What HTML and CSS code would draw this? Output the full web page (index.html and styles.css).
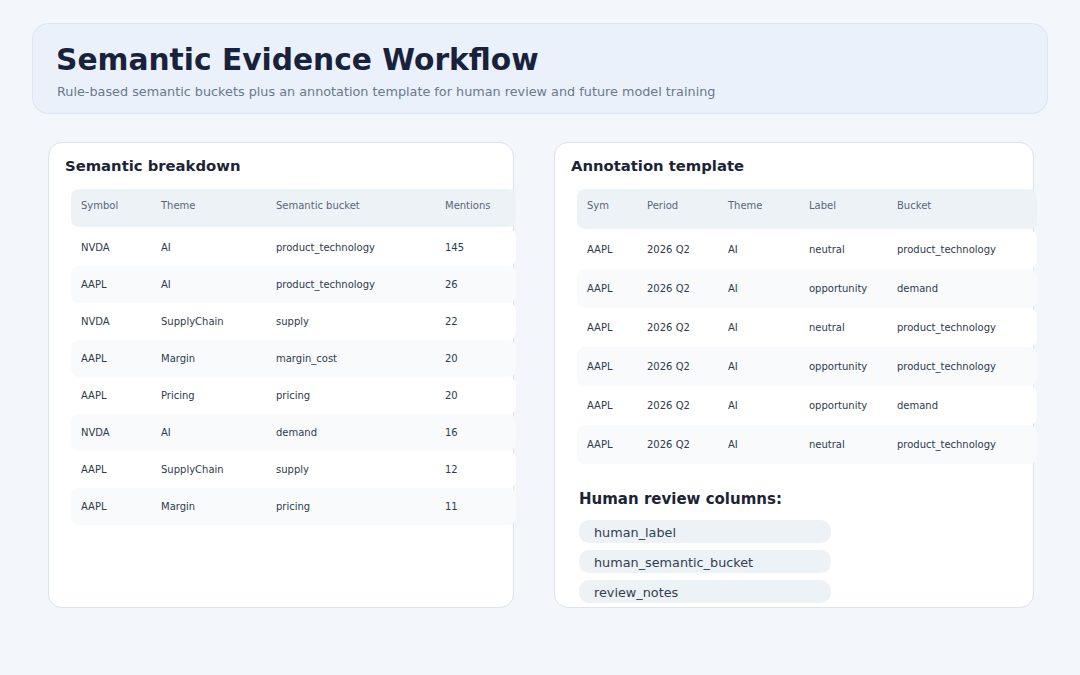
FILE: index.html
```html
<!DOCTYPE html>
<html>
<head>
<meta charset="utf-8">
<link rel="stylesheet" href="styles.css">
</head>
<body>
<div class="page">
  <header class="hero">
    <h1 class="hero-title">Semantic Evidence Workflow</h1>
    <p class="hero-sub">Rule-based semantic buckets plus an annotation template for human review and future model training</p>
  </header>
  <main class="cards">
    <section class="card card-left">
      <h2 class="card-title">Semantic breakdown</h2>
      <div class="tbl tbl-left">
        <div class="row head"><span>Symbol</span><span>Theme</span><span>Semantic bucket</span><span>Mentions</span></div>
        <div class="row"><span>NVDA</span><span>AI</span><span>product_technology</span><span>145</span></div>
        <div class="row alt"><span>AAPL</span><span>AI</span><span>product_technology</span><span>26</span></div>
        <div class="row"><span>NVDA</span><span>SupplyChain</span><span>supply</span><span>22</span></div>
        <div class="row alt"><span>AAPL</span><span>Margin</span><span>margin_cost</span><span>20</span></div>
        <div class="row"><span>AAPL</span><span>Pricing</span><span>pricing</span><span>20</span></div>
        <div class="row alt"><span>NVDA</span><span>AI</span><span>demand</span><span>16</span></div>
        <div class="row"><span>AAPL</span><span>SupplyChain</span><span>supply</span><span>12</span></div>
        <div class="row alt"><span>AAPL</span><span>Margin</span><span>pricing</span><span>11</span></div>
      </div>
    </section>
    <section class="card card-right">
      <h2 class="card-title">Annotation template</h2>
      <div class="tbl tbl-right">
        <div class="row head"><span>Sym</span><span>Period</span><span>Theme</span><span>Label</span><span>Bucket</span></div>
        <div class="row"><span>AAPL</span><span>2026 Q2</span><span>AI</span><span>neutral</span><span>product_technology</span></div>
        <div class="row alt"><span>AAPL</span><span>2026 Q2</span><span>AI</span><span>opportunity</span><span>demand</span></div>
        <div class="row"><span>AAPL</span><span>2026 Q2</span><span>AI</span><span>neutral</span><span>product_technology</span></div>
        <div class="row alt"><span>AAPL</span><span>2026 Q2</span><span>AI</span><span>opportunity</span><span>product_technology</span></div>
        <div class="row"><span>AAPL</span><span>2026 Q2</span><span>AI</span><span>opportunity</span><span>demand</span></div>
        <div class="row alt"><span>AAPL</span><span>2026 Q2</span><span>AI</span><span>neutral</span><span>product_technology</span></div>
      </div>
      <h3 class="review-title">Human review columns:</h3>
      <ul class="chips">
        <li class="chip">human_label</li>
        <li class="chip">human_semantic_bucket</li>
        <li class="chip">review_notes</li>
      </ul>
    </section>
  </main>
</div>
</body>
</html>
```

FILE: styles.css
```css
* { box-sizing: border-box; }
html, body { margin: 0; padding: 0; }
body {
  background: #f3f6fb;
  font-family: "DejaVu Sans", "Liberation Sans", sans-serif;
  color: #1b2436;
  width: 1080px;
  height: 675px;
  overflow: hidden;
}
.page {
  padding: 23px 32px 0 32px;
}
.hero {
  height: 91px;
  background: #eaf1fb;
  border: 1px solid #dce5f1;
  border-radius: 16px;
  padding: 16px 23px 0 23px;
}
.hero-title {
  margin: 0;
  font-size: 29.7px;
  line-height: 40px;
  font-weight: 700;
  color: #18223a;
}
.hero-sub {
  margin: 4px 0 0 1px;
  font-size: 12.8px;
  line-height: 16px;
  color: #6b788c;
}
.cards {
  display: grid;
  grid-template-columns: 466px 480px;
  column-gap: 40px;
  padding: 28px 15px 0 16px;
}
.card {
  height: 466px;
  background: #ffffff;
  border: 1px solid #dbe3ee;
  border-radius: 14px;
  padding: 13px 16px 0 16px;
}
.card-title {
  margin: 0;
  font-size: 14.8px;
  line-height: 20px;
  font-weight: 700;
  color: #1b2436;
}
.tbl {
  margin: 13px 0 0 6px;
  font-size: 10px;
  color: #2f3a4c;
  display: flex;
  flex-direction: column;
}
.tbl-left { width: 445px; }
.tbl-right { width: 460px; }
.row {
  display: grid;
  align-items: center;
  border-radius: 8px;
  background: #ffffff;
  padding-left: 10px;
}
.tbl-left .row { grid-template-columns: 80px 115px 169px 71px; height: 37px; }
.tbl-left .row.head { height: 38px; margin-bottom: 2px; padding-bottom: 6px; }
.tbl-right .row { grid-template-columns: 60px 81px 81px 88px 140px; height: 39px; }
.tbl-right .row.head { height: 40px; margin-bottom: 1px; padding-bottom: 7px; }
.row.head { background: #edf2f7; color: #5a6578; }
.row.alt { background: #f8fafc; }
.review-title {
  margin: 25px 0 0 8px;
  font-size: 15px;
  line-height: 20px;
  font-weight: 700;
  color: #1b2436;
}
.chips {
  list-style: none;
  margin: 11px 0 0 8px;
  padding: 0;
  display: flex;
  flex-direction: column;
  gap: 7px;
}
.chip {
  width: 252px;
  height: 23px;
  background: #edf2f7;
  border-radius: 10px;
  padding-left: 15px;
  font-size: 12.8px;
  line-height: 25px;
  color: #333e50;
}
```
